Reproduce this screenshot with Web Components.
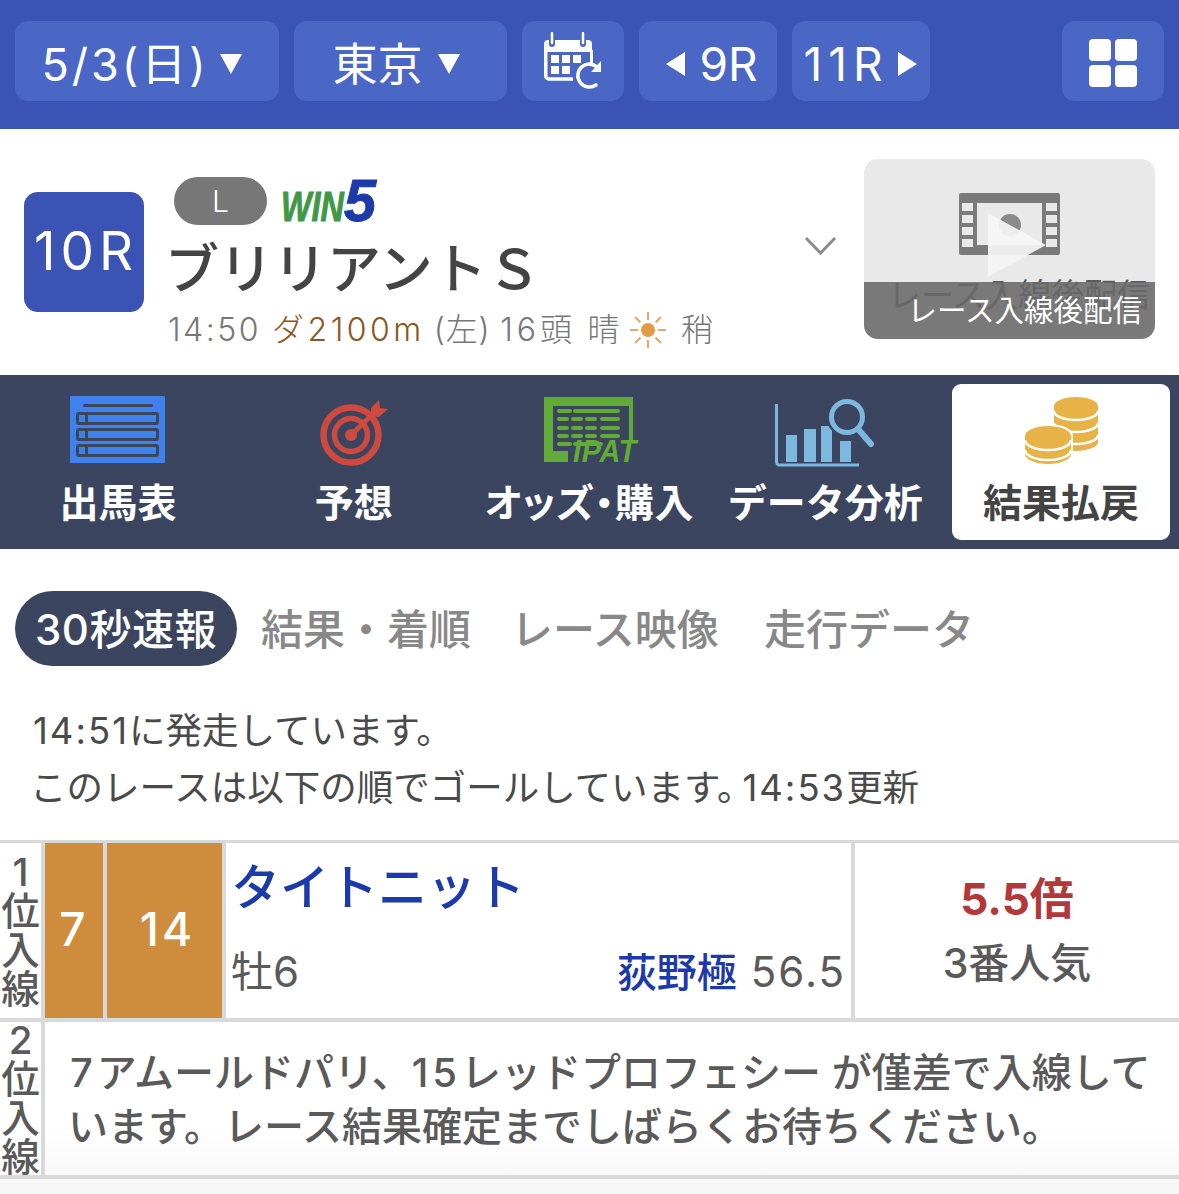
<!DOCTYPE html>
<html lang="ja">
<head>
<meta charset="utf-8">
<title>ブリリアントS</title>
<style>
html, body {
	margin: 0;
	padding: 0;
	background: #fff;
	font-family: Inter, "Noto Sans CJK JP", sans-serif;
	overflow: hidden;
}
</style>
</head>
<body>
<race-page></race-page>
<script>
const BASE = `*{box-sizing:border-box} svg{display:block}`;

// small helper: each element is only a template with a shadow root
const define = (name, html) => {
	const template = document.createElement('template');
	template.innerHTML = html;
	customElements.define(name, class extends HTMLElement {
		constructor() {
			super();
			this.attachShadow({mode: 'open'}).appendChild(template.content.cloneNode(true));
		}
	});
};

define('top-button', `
<style>${BASE}
:host {
	display: flex;
	align-items: center;
	justify-content: center;
	height: 80px;
	background: #4b67c5;
	border-radius: 13px;
	color: #fff;
	font-size: 45px;
	line-height: 1;
	white-space: nowrap;
}
</style>
<slot></slot>`);

define('top-bar', `
<style>${BASE}
:host {
	display: flex;
	align-items: flex-start;
	gap: 15px;
	height: 129px;
	padding: 21px 15px 0;
	background: #3a53b5;
}
.date { width: 264px; padding-right: 10px; letter-spacing: 3px; }
.place { width: 213px; padding-right: 8px; }
.cal { width: 102px; }
.prev, .next { width: 138px; font-size: 46px; }
.prev { padding-left: 8px; }
.next { padding-right: 2px; }
.menu { width: 102px; margin-left: auto; }
.t { position: relative; top: 3px; }
.tri { margin-left: 10px; position: relative; top: 3px; }
.nav-l { margin-right: 14px; position: relative; top: 3px; }
.nav-r { margin-left: 9px; position: relative; top: 3px; }
.num { letter-spacing: 6px; }
</style>
<top-button class="date"><span class="t">5/3(日)</span><svg class="tri" width="24" height="22" viewBox="0 0 24 22"><path d="M1 1h22L12 21z" fill="#fff"/></svg></top-button>
<top-button class="place"><span class="t">東京</span><svg class="tri" style="margin-left:14px" width="24" height="22" viewBox="0 0 24 22"><path d="M1 1h22L12 21z" fill="#fff"/></svg></top-button>
<top-button class="cal">
	<svg width="60" height="58" viewBox="0 0 60 58" fill="none" style="margin-left:2px">
		<path d="M4 8h40a4 4 0 0 1 4 4v8H0v-8a4 4 0 0 1 4-4z" fill="#fff"/>
		<path d="M1.750 18v26a3 3 0 0 0 3 3H29" stroke="#fff" stroke-width="3.500"/>
		<path d="M47.500 18v16" stroke="#fff" stroke-width="3"/>
		<path d="M8 1v11M39 1v11" stroke="#4b67c5" stroke-width="6" stroke-linecap="round"/>
		<path d="M8 1v10M39 1v10" stroke="#fff" stroke-width="2.500" stroke-linecap="round"/>
		<g fill="#fff">
			<rect x="7" y="23" width="8" height="8"/><rect x="18" y="23" width="8" height="8"/><rect x="29" y="23" width="8" height="8"/>
			<rect x="7" y="34" width="8" height="8"/><rect x="18" y="34" width="8" height="8"/>
		</g>
		<path d="M52 53a11.500 11.500 0 1 1 2-17" stroke="#fff" stroke-width="3.500" stroke-linecap="round"/>
		<path d="M57 29v11H47z" fill="#fff"/>
	</svg>
</top-button>
<top-button class="prev"><svg class="nav-l" width="19" height="24" viewBox="0 0 19 24"><path d="M19 0v24L0 12z" fill="#fff"/></svg><span class="t">9R</span></top-button>
<top-button class="next"><span class="t num">11R</span><svg class="nav-r" width="19" height="24" viewBox="0 0 19 24"><path d="M0 0v24l19-12z" fill="#fff"/></svg></top-button>
<top-button class="menu">
	<svg width="48" height="48" viewBox="0 0 48 48" fill="#fff" style="position:relative;top:2px"><rect width="22" height="22" rx="4"/><rect x="26" width="22" height="22" rx="4"/><rect y="26" width="22" height="22" rx="4"/><rect x="26" y="26" width="22" height="22" rx="4"/></svg>
</top-button>`);

define('video-thumb', `
<style>${BASE}
:host {
	display: block;
	position: relative;
	flex: none;
	width: 291px;
	height: 180px;
	background: #e9e9e9;
	border-radius: 14px;
	overflow: hidden;
}
.film { position: absolute; left: 95px; top: 34px; }
.play { position: absolute; left: 124px; top: 54px; opacity: .92; }
.under {
	position: absolute;
	left: 24px;
	top: 113px;
	font-size: 33px;
	line-height: 46px;
	color: #5c5c5c;
	white-space: nowrap;
}
.bar {
	position: absolute;
	left: 0;
	right: 0;
	bottom: 0;
	height: 57px;
	padding: 2px 13px 0 0;
	background: rgba(105,105,105,.87);
	color: #fff;
	font-size: 29.500px;
	line-height: 52px;
	text-align: right;
	white-space: nowrap;
}
</style>
<svg class="film" width="101" height="62" viewBox="0 0 101 62">
	<rect width="101" height="62" rx="2" fill="#7a7a7a"/>
	<rect x="18" y="10" width="65" height="42" fill="#e9e9e9"/>
	<g fill="#e9e9e9">
		<rect x="3" y="10" width="11" height="8"/><rect x="3" y="22" width="11" height="8"/><rect x="3" y="34" width="11" height="8"/><rect x="3" y="46" width="11" height="8"/>
		<rect x="87" y="10" width="11" height="8"/><rect x="87" y="22" width="11" height="8"/><rect x="87" y="34" width="11" height="8"/><rect x="87" y="46" width="11" height="8"/>
	</g>
	<circle cx="51" cy="32" r="11" fill="#8a8a8a"/>
</svg>
<svg class="play" width="58" height="64" viewBox="0 0 58 64"><path d="M0 0l58 32L0 64z" fill="#f6f6f6"/></svg>
<div class="under">レース入線後配信</div>
<div class="bar">レース入線後配信</div>`);

define('race-summary', `
<style>${BASE}
:host {
	display: flex;
	align-items: flex-start;
	height: 246px;
	padding: 30px 24px 0;
	background: #fff;
	color: #444;
}
.no {
	flex: none;
	display: flex;
	align-items: center;
	justify-content: center;
	width: 120px;
	height: 120px;
	margin-top: 33px;
	padding: 0 0 3px 4px;
	background: #3a53b5;
	border-radius: 14px;
	color: #fff;
	font-size: 53px;
	letter-spacing: 5px;
}
.info { flex: none; width: 648px; margin: 18px 0 0 24px; }
.tags { display: flex; align-items: center; gap: 15px; height: 48px; padding-left: 6px; }
.grade {
	display: flex;
	align-items: center;
	justify-content: center;
	width: 93px;
	height: 48px;
	border-radius: 24px;
	background: #777;
	color: #fff;
	font-size: 30px;
	font-weight: 300;
}
.win {
	display: flex;
	align-items: baseline;
	margin: 4px 0 0 -1px;
	font-family: "Liberation Sans", sans-serif;
	font-style: italic;
	font-weight: 700;
	font-size: 43px;
	line-height: 44px;
	color: #3f9848;
	-webkit-text-stroke: 1px #3f9848;
	transform: scaleX(.75);
	transform-origin: left center;
	white-space: nowrap;
}
.win b {
	display: inline-block;
	font-size: 60px;
	line-height: 44px;
	color: #1c3aa9;
	-webkit-text-stroke: 1px #1c3aa9;
	transform: scaleX(1.28);
	transform-origin: left center;
}
.name {
	margin: 6px 0 0 -3px;
	font-size: 54px;
	font-weight: 500;
	line-height: 78px;
	white-space: nowrap;
}
.meta {
	display: flex;
	align-items: center;
	margin-top: -2px;
	font-size: 32px;
	font-weight: 300;
	line-height: 46px;
	color: #777;
	letter-spacing: 2.500px;
	white-space: pre;
}
.brown { color: #8a5724; letter-spacing: 3.500px; margin: 0 9px 0 11px; }
.dir { letter-spacing: .8px; }
.cnt { letter-spacing: 4px; }
.sun { margin: 0 14px 0 7px; }
.chev { flex: none; margin: 77px 27px 0 -12px; }
</style>
<div class="no">10R</div>
<div class="info">
	<div class="tags">
		<span class="grade">L</span>
		<span class="win">WIN<b>5</b></span>
	</div>
	<div class="name">ブリリアントＳ</div>
	<div class="meta">14:50<span class="brown">ダ2100m</span><span class="dir">(左) </span> <span class="cnt">16頭</span> 晴<svg class="sun" width="38" height="38" viewBox="0 0 38 38"><circle cx="19" cy="19" r="7" fill="#e39a45"/><path d="M19 1v8M19 29v8M1 19h8M29 19h8M6 6l5.500 5.500M26.500 26.500L32 32M6 32l5.500-5.500M26.500 11.500L32 6" stroke="#e7a866" stroke-width="2"/></svg>稍</div>
</div>
<svg class="chev" width="33" height="20" viewBox="0 0 33 20" fill="none"><path d="M2 2l14.500 15L31 2" stroke="#8c8c8c" stroke-width="3"/></svg>
<video-thumb></video-thumb>`);

define('nav-item', `
<style>${BASE}
:host {
	flex: 1 1 0;
	display: flex;
	flex-direction: column;
	align-items: center;
	position: relative;
	min-width: 0;
	height: 174px;
	padding-top: 21px;
	color: #fff;
	font-size: 39px;
	font-weight: 700;
	white-space: nowrap;
}
:host([active]) { color: #444; }
:host([tight]) { font-feature-settings: "palt"; letter-spacing: .7px; }
:host([active])::before {
	content: "";
	position: absolute;
	z-index: -1;
	left: 9px;
	right: 9px;
	top: 9px;
	bottom: 9px;
	background: #fff;
	border-radius: 9px;
}
.icon { display: flex; justify-content: center; align-items: flex-start; height: 70px; }
.label { margin-top: 10px; line-height: 54px; }
</style>
<div class="icon"><slot name="icon"></slot></div>
<div class="label"><slot></slot></div>`);

define('race-nav', `
<style>${BASE}
:host {
	display: flex;
	position: relative;
	z-index: 0;
	height: 174px;
	background: #3c4560;
	overflow: hidden;
}
.ipat {
	position: relative;
	width: 94px;
	height: 68px;
}
.ipat span {
	position: absolute;
	right: 0;
	bottom: 0;
	font-family: "Liberation Sans", sans-serif;
	font-size: 32px;
	font-style: italic;
	font-weight: 700;
	line-height: 26px;
	color: #62ab37;
	transform: scaleX(.9);
	transform-origin: right center;
}
</style>
<nav-item>
	<svg slot="icon" width="96" height="67" viewBox="0 0 96 67">
		<rect width="95" height="67" rx="1" fill="#3f82ec"/>
		<rect x="13" y="8" width="70" height="3" rx="1.500" fill="#3c4560"/>
		<g fill="none" stroke="#3c4560" stroke-width="3">
			<rect x="7.500" y="17.500" width="80" height="10" rx="1.500"/>
			<rect x="7.500" y="33.500" width="80" height="10" rx="1.500"/>
			<rect x="7.500" y="49.500" width="80" height="10" rx="1.500"/>
		</g>
		<path d="M16.500 17v11M16.500 33v11M16.500 49v11" stroke="#3c4560" stroke-width="3"/>
	</svg>
	出馬表
</nav-item>
<nav-item>
	<svg slot="icon" width="70" height="70" viewBox="0 0 70 70" fill="none" style="margin:3px 0 -3px 2px">
		<circle cx="31" cy="36" r="27.500" stroke="#cf4a3e" stroke-width="6.500"/>
		<circle cx="31" cy="36" r="16.500" stroke="#cf4a3e" stroke-width="5.500"/>
		<circle cx="31" cy="36" r="6" fill="#cf4a3e"/>
		<path d="M31 36L56 12" stroke="#cf4a3e" stroke-width="5"/>
		<path d="M51 9l8-8 1 8 8 1-9 8-8-1z" fill="#cf4a3e"/>
	</svg>
	予想
</nav-item>
<nav-item tight>
	<div slot="icon" class="ipat">
		<svg width="94" height="68" viewBox="0 0 94 68" fill="none">
			<path d="M2 1H91V46H87V10H11V55H26V66H2Z" fill="#62ab37"/>
			<g stroke="#62ab37" stroke-width="4" stroke-linecap="round">
				<path d="M17 15h11M33 15h43"/>
				<path d="M17 23h8M31 23h8M45 23h8M60 23h16"/>
				<path d="M17 32h8M31 32h8M45 32h8M60 32h16"/>
				<path d="M17 40h8M31 40h8M45 40h8M60 40h16"/>
				<path d="M17 48h11M33 48h26"/>
			</g>
		</svg>
		<span>IPAT</span>
	</div>
	オッズ・購入
</nav-item>
<nav-item>
	<svg slot="icon" width="100" height="68" viewBox="0 0 100 68" fill="none" style="margin:3px 0 -3px">
		<path d="M1.500 5v58a3 3 0 0 0 3 3H84" stroke="#7db9de" stroke-width="3"/>
		<g fill="#7db9de">
			<rect x="11" y="36" width="11" height="27"/>
			<rect x="29" y="30" width="12" height="33"/>
			<rect x="46" y="27" width="11" height="36"/>
			<rect x="65" y="42" width="11" height="21"/>
		</g>
		<circle cx="72" cy="18" r="15.500" stroke="#3c4560" stroke-width="10"/>
		<circle cx="72" cy="18" r="15.500" stroke="#7db9de" stroke-width="5"/>
		<path d="M83 30l13 15" stroke="#7db9de" stroke-width="6" stroke-linecap="round"/>
	</svg>
	データ分析
</nav-item>
<nav-item active>
	<svg slot="icon" width="78" height="68" viewBox="0 0 78 68" fill="#e8b346">
		<path d="M32 10a22 9 0 0 1 44 0v36a22 9 0 0 1-44 0z"/>
		<g fill="none" stroke="#fff" stroke-width="2.500">
			<path d="M32 15a22 9 0 0 0 44 0"/>
			<path d="M32 27a22 9 0 0 0 44 0"/>
			<path d="M32 39a22 9 0 0 0 44 0"/>
		</g>
		<path d="M3 40a23 10 0 0 1 46 0v18a23 10 0 0 1-46 0z" stroke="#fff" stroke-width="4" paint-order="stroke"/>
		<g fill="none" stroke="#fff" stroke-width="2.500">
			<path d="M3 44a23 10 0 0 0 46 0"/>
			<path d="M3 54a23 10 0 0 0 46 0"/>
		</g>
	</svg>
	結果払戻
</nav-item>`);

define('tab-pill', `
<style>${BASE}
:host {
	display: block;
	height: 75px;
	padding-top: 2px;
	font-size: 42px;
	font-weight: 500;
	line-height: 73px;
	color: #888;
	white-space: nowrap;
}
:host([active]) {
	padding: 2px 20px 0;
	border-radius: 38px;
	background: #3c4560;
	color: #fff;
	letter-spacing: .5px;
}
</style>
<slot></slot>`);

define('result-tabs', `
<style>${BASE}
:host {
	display: flex;
	gap: 40px;
	height: 75px;
	margin: 42px 0 0 15px;
}
tab-pill[active] { margin-right: -16px; }
tab-pill.last { margin-left: 5px; }
</style>
<tab-pill active>30秒速報</tab-pill>
<tab-pill>結果・着順</tab-pill>
<tab-pill>レース映像</tab-pill>
<tab-pill class="last">走行データ</tab-pill>`);

define('status-note', `
<style>${BASE}
:host {
	display: block;
	height: 174px;
	padding: 37px 0 0 33px;
	color: #4a4a4a;
	font-size: 36.500px;
	font-weight: 400;
	line-height: 57px;
	white-space: nowrap;
}
</style>
<slot></slot>`);

define('finish-table', `
<style>${BASE}
:host {
	display: grid;
	grid-template-columns: 41px 58px 115px 625px 1fr;
	grid-template-rows: 175px 153px;
	gap: 4px;
	padding: 3px 0 4px;
	background: #d9d9d9;
	color: #5a5a5a;
	height: 339px;
}
.rank {
	display: flex;
	align-items: center;
	justify-content: center;
	background: #fff;
	font-size: 38.500px;
	font-weight: 500;
	line-height: 39px;
	text-align: center;
	white-space: nowrap;
}
.frame {
	display: flex;
	align-items: center;
	justify-content: center;
	background: #cf8c3c;
	color: #fff;
	font-size: 46px;
	font-weight: 500;
	padding-bottom: 4px;
	letter-spacing: 3px;
}
.wide { padding-left: 6px; }
.horse { background: #fff; padding: 0 5px; }
.title {
	height: 86px;
	font-size: 49px;
	font-weight: 500;
	line-height: 90px;
	color: #1c3aa9;
	white-space: nowrap;
}
.sub {
	display: flex;
	justify-content: space-between;
	margin-top: 3px;
	font-size: 42px;
	line-height: 80px;
	white-space: nowrap;
}
.wt { letter-spacing: 2px; }
.jockey { color: #1c3aa9; font-size: 40px; font-weight: 500; margin-right: 14px; }
.odds {
	display: flex;
	flex-direction: column;
	align-items: center;
	background: #fff;
	padding-top: 27px;
	white-space: nowrap;
}
.odds b { font-size: 44px; font-weight: 700; line-height: 58px; color: #b2383a; }
.odds span { font-size: 41px; font-weight: 500; line-height: 70px; }
.note {
	grid-column: 2 / -1;
	background: linear-gradient(#fff 70%, #f8f8f8);
	padding: 24px 0 0 23px;
	font-size: 40px;
	font-weight: 500;
	line-height: 54px;
	white-space: nowrap;
}
.note i { font-style: normal; letter-spacing: 4px; }
.note i:first-child { margin-left: 2px; }
</style>
<div class="rank">1<br>位<br>入<br>線</div>
<div class="frame">7</div>
<div class="frame wide">14</div>
<div class="horse">
	<div class="title">タイトニット</div>
	<div class="sub"><span>牡6</span><span><span class="jockey">荻野極</span><span class="wt">56.5</span></span></div>
</div>
<div class="odds"><b>5.5倍</b><span>3番人気</span></div>
<div class="rank">2<br>位<br>入<br>線</div>
<div class="note"><i>7</i>アムールドパリ、<i>15</i>レッドプロフェシー が僅差で入線して<br>います。レース結果確定までしばらくお待ちください。</div>`);

define('race-page', `
<style>${BASE}
:host {
	display: block;
	width: 1179px;
	height: 1194px;
	overflow: hidden;
	background: #fff;
}
.foot { height: 15px; background: #f7f7f7; }
.num { letter-spacing: 2px; }
.first { margin-left: -3px; }
.after { margin-left: -11px; }
</style>
<top-bar></top-bar>
<race-summary></race-summary>
<race-nav></race-nav>
<result-tabs></result-tabs>
<status-note><span class="num">14:51</span>に発走しています。<br><span class="first">このレースは以下の順でゴールしています。</span><span class="num after">14:53</span>更新</status-note>
<finish-table></finish-table>
<div class="foot"></div>`);
</script>
</body>
</html>
